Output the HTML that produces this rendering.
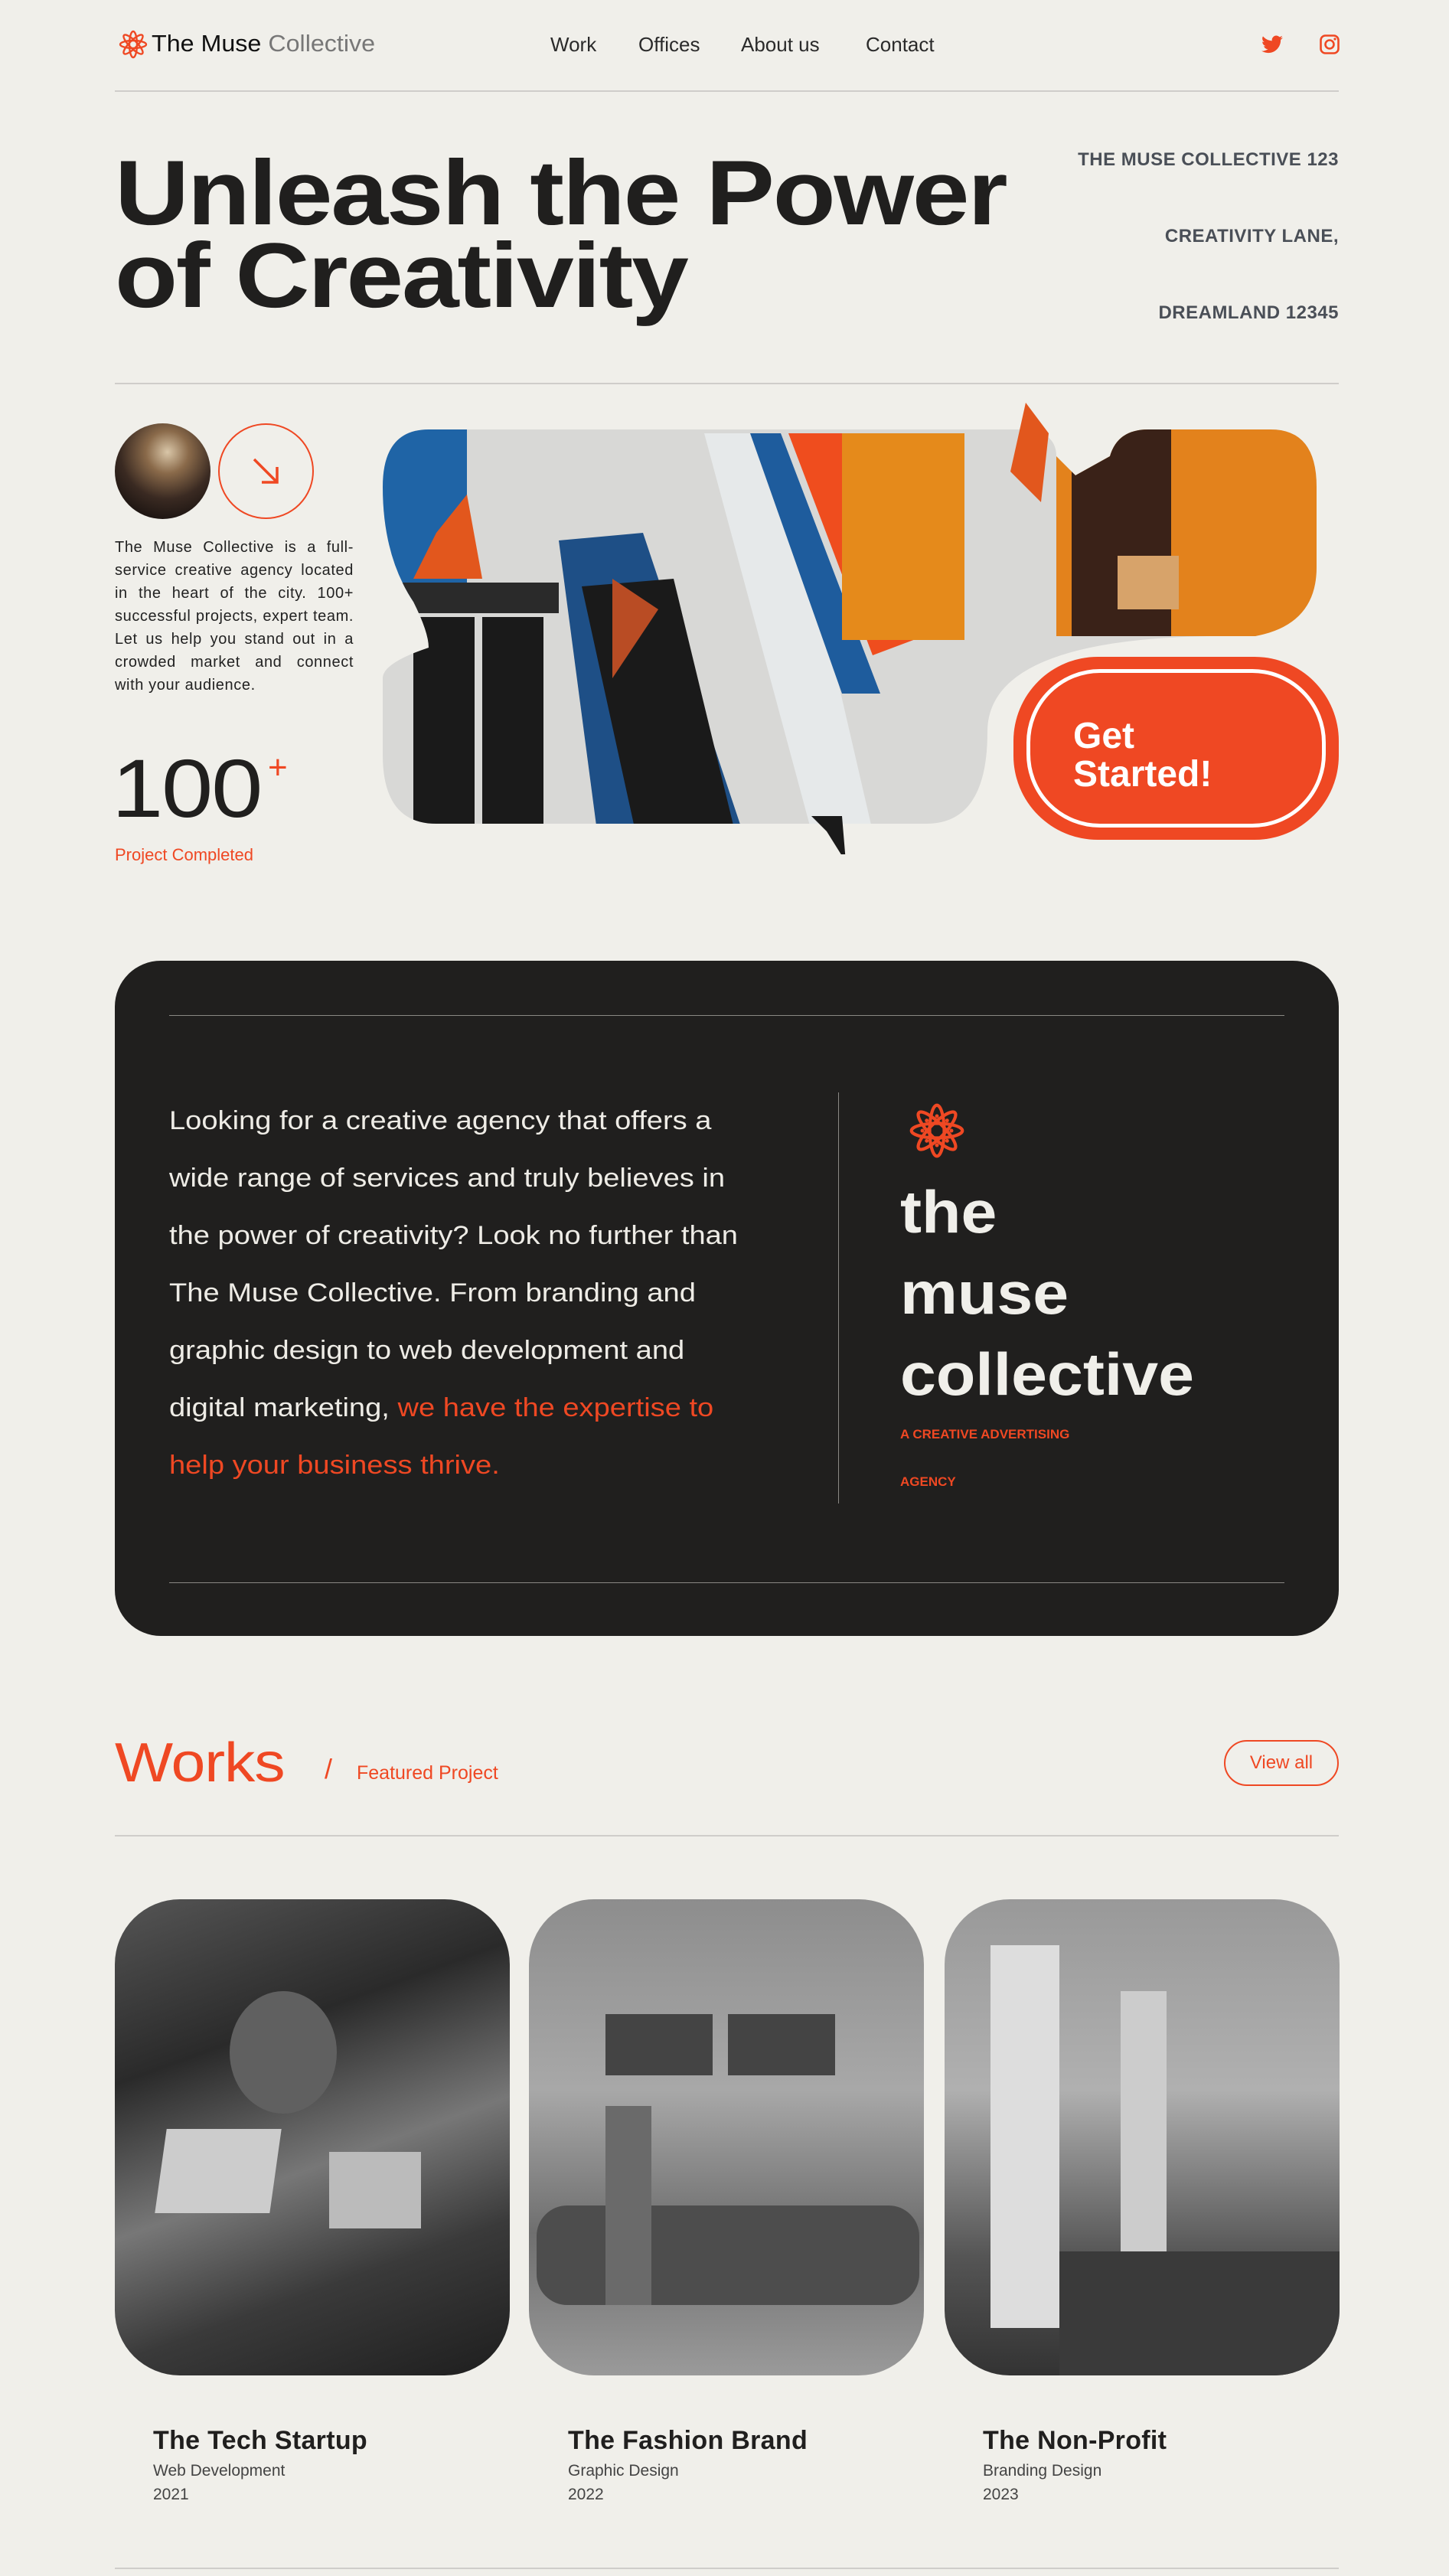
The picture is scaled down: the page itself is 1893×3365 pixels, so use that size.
<!DOCTYPE html>
<html><head><meta charset="utf-8"><style>
*{margin:0;padding:0;box-sizing:border-box}
body{width:1893px;height:3365px;background:#f0efea;position:relative;font-family:"Liberation Sans",sans-serif;color:#201f1e;overflow:hidden}
.a{position:absolute}
.line{position:absolute;left:150px;width:1599px;height:2px;background:#cfcdca}
.nav{font-size:26px;color:#2a2a2a;top:43px}
.addr{right:144px;font-size:24px;font-weight:bold;color:#4a4f57;letter-spacing:0.5px}
.h1{font-size:120px;font-weight:bold;letter-spacing:-2px;line-height:108px;left:150px;top:198px;transform:scaleX(1.12);transform-origin:left}
.card{position:absolute;top:2481px;width:516px;height:622px;border-radius:85px;overflow:hidden}
.ct{font-size:34px;font-weight:bold;top:3169px;letter-spacing:0.3px}
.cs{font-size:21px;color:#444;top:3216px}
.cy{font-size:21px;color:#444;top:3247px}
</style></head><body>

<!-- header -->
<svg class="a" style="left:154px;top:38px" width="40" height="40" viewBox="-20 -20 40 40">
<g fill="none" stroke="#ef4823" stroke-width="2.4">
<ellipse rx="5" ry="17"/><ellipse rx="5" ry="17" transform="rotate(45)"/><ellipse rx="5" ry="17" transform="rotate(90)"/><ellipse rx="5" ry="17" transform="rotate(135)"/></g></svg>
<div class="a" style="left:198px;top:39px;font-size:31px;transform:scaleX(1.04);transform-origin:left"><span style="color:#111">The Muse</span> <span style="color:#777">Collective</span></div>
<div class="a nav" style="left:719px">Work</div>
<div class="a nav" style="left:834px">Offices</div>
<div class="a nav" style="left:968px">About us</div>
<div class="a nav" style="left:1131px">Contact</div>
<svg class="a" style="left:1648px;top:46px" width="28" height="24" viewBox="0 0 24 20"><path fill="#ef4823" d="M24 2.4a10 10 0 0 1-2.8.8A5 5 0 0 0 23.3.5a10 10 0 0 1-3.1 1.2A4.9 4.9 0 0 0 11.8 6 14 14 0 0 1 1.7.9a4.9 4.9 0 0 0 1.5 6.6A4.9 4.9 0 0 1 1 6.9v.1a4.9 4.9 0 0 0 3.9 4.8 5 5 0 0 1-2.2.1 4.9 4.9 0 0 0 4.6 3.4A9.9 9.9 0 0 1 0 17.3 14 14 0 0 0 7.5 19.5c9 0 14-7.5 14-14v-.6A10 10 0 0 0 24 2.4z"/></svg>
<svg class="a" style="left:1724px;top:45px" width="26" height="26" viewBox="0 0 26 26"><rect x="1.5" y="1.5" width="23" height="23" rx="6" fill="none" stroke="#ef4823" stroke-width="2.6"/><circle cx="13" cy="13" r="5.5" fill="none" stroke="#ef4823" stroke-width="2.6"/><circle cx="20" cy="6" r="1.6" fill="#ef4823"/></svg>
<div class="line" style="top:118px"></div>

<!-- hero -->
<div class="a h1">Unleash the Power<br>of Creativity</div>
<div class="a addr" style="top:195px">THE MUSE COLLECTIVE 123</div>
<div class="a addr" style="top:295px">CREATIVITY LANE,</div>
<div class="a addr" style="top:395px">DREAMLAND 12345</div>
<div class="line" style="top:500px"></div>

<div class="a" style="left:150px;top:553px;width:125px;height:125px;border-radius:50%;background:radial-gradient(circle at 55% 30%,#d9c6a8 0,#8a6a4a 25%,#3a2a22 55%,#1d1512 80%);overflow:hidden"></div>
<div class="a" style="left:285px;top:553px;width:125px;height:125px;border-radius:50%;border:2px solid #ef4823"></div>
<svg class="a" style="left:322px;top:590px" width="52" height="52" viewBox="0 0 52 52"><path d="M10 10 L40 40 M40 20 V40 H20" fill="none" stroke="#ef4823" stroke-width="3.5"/></svg>
<div class="a" style="left:150px;top:700px;width:312px;font-size:20px;letter-spacing:0.6px;line-height:30px;text-align:justify;color:#222">The Muse Collective is a full-service creative agency located in the heart of the city. 100+ successful projects, expert team. Let us help you stand out in a crowded market and connect with your audience.</div>
<div class="a" style="left:146px;top:975px;font-size:108px;letter-spacing:-2px;line-height:110px;transform:scaleX(1.12);transform-origin:left">100</div>
<div class="a" style="left:350px;top:978px;font-size:44px;color:#ef4823;line-height:50px">+</div>
<div class="a" style="left:150px;top:1104px;font-size:22px;color:#ef4823">Project Completed</div>

<!-- collage -->
<svg class="a" style="left:500px;top:526px" width="1227" height="590" viewBox="0 0 1227 590">
<defs><clipPath id="cp"><path d="M60 35 H830 Q880 35 880 70 L905 95 L950 70 Q960 35 1000 35 H1160 Q1220 35 1220 110 V215 Q1220 290 1140 305 H1080 Q790 310 790 430 Q790 550 710 550 H70 Q0 550 0 460 V360 Q0 340 60 320 Q60 300 40 260 Q0 200 0 110 Q0 35 60 35 Z"/></clipPath></defs>
<g clip-path="url(#cp)">
<rect width="1227" height="590" fill="#d8d8d6"/>
<rect x="0" y="0" width="110" height="260" fill="#1f64a6"/>
<polygon points="70,170 110,120 130,230 40,230" fill="#e2571d"/>
<rect x="0" y="235" width="230" height="40" fill="#2a2a2a"/>
<rect x="40" y="280" width="80" height="280" fill="#1a1a1a"/>
<rect x="130" y="280" width="80" height="280" fill="#1a1a1a"/>
<polygon points="230,180 340,170 470,560 280,560" fill="#1e4f86"/>
<polygon points="260,240 380,230 460,560 330,560" fill="#1a1a1a"/>
<polygon points="300,230 360,270 300,360" fill="#b94c24"/>
<polygon points="420,40 520,40 640,560 560,560" fill="#e6e9ea"/>
<polygon points="480,40 520,40 650,380 600,380" fill="#1e5c9d"/>
<polygon points="530,40 600,40 720,300 640,330" fill="#ef4d1e"/>
<rect x="600" y="40" width="160" height="270" fill="#e58a1b"/>
<rect x="880" y="35" width="340" height="270" fill="#e3821c"/>
<rect x="900" y="35" width="130" height="270" fill="#3a2218"/>
<rect x="960" y="200" width="80" height="70" fill="#d7a36a"/>
</g>
<polygon points="840,0 870,40 860,130 820,90" fill="#e2571d"/>
<polygon points="560,540 600,540 605,600 580,560" fill="#1a1a1a"/>
</svg>
<div class="a" style="left:1324px;top:858px;width:425px;height:239px;border-radius:110px;background:#ef4823"></div>
<div class="a" style="left:1341px;top:874px;width:391px;height:207px;border-radius:96px;border:5px solid #fff"></div>
<div class="a" style="left:1402px;top:937px;font-size:48px;font-weight:bold;color:#fff;line-height:50px">Get<br>Started!</div>

<!-- dark box -->
<div class="a" style="left:150px;top:1255px;width:1599px;height:882px;border-radius:60px;background:#201f1e"></div>
<div class="a" style="left:221px;top:1326px;width:1457px;height:1px;background:#8a8884"></div>
<div class="a" style="left:221px;top:2067px;width:1457px;height:1px;background:#8a8884"></div>
<div class="a" style="left:1095px;top:1427px;width:1px;height:537px;background:#8a8884"></div>
<div class="a" style="left:221px;top:1427px;font-size:34px;line-height:75px;color:#eeece6;white-space:nowrap;transform:scaleX(1.12);transform-origin:left">Looking for a creative agency that offers a<br>wide range of services and truly believes in<br>the power of creativity? Look no further than<br>The Muse Collective. From branding and<br>graphic design to web development and<br>digital marketing, <span style="color:#ef4823">we have the expertise to<br>help your business thrive.</span></div>
<svg class="a" style="left:1186px;top:1439px" width="76" height="76" viewBox="-20 -20 40 40">
<g fill="none" stroke="#ef4823" stroke-width="2.2">
<ellipse rx="5" ry="17.5"/><ellipse rx="5" ry="17.5" transform="rotate(45)"/><ellipse rx="5" ry="17.5" transform="rotate(90)"/><ellipse rx="5" ry="17.5" transform="rotate(135)"/></g>
<g fill="#ef4823"><circle cy="-10" r="1.3"/><circle cy="10" r="1.3"/><circle cx="-10" r="1.3"/><circle cx="10" r="1.3"/><circle cx="7" cy="7" r="1.3"/><circle cx="-7" cy="7" r="1.3"/><circle cx="7" cy="-7" r="1.3"/><circle cx="-7" cy="-7" r="1.3"/></g></svg>
<div class="a" style="left:1176px;top:1530px;font-size:78px;font-weight:bold;color:#f0efea;line-height:106px;transform:scaleX(1.08);transform-origin:left">the<br>muse<br>collective</div>
<div class="a" style="left:1176px;top:1864px;font-size:17px;font-weight:bold;color:#ef4823">A CREATIVE ADVERTISING</div>
<div class="a" style="left:1176px;top:1926px;font-size:17px;font-weight:bold;color:#ef4823">AGENCY</div>

<!-- works -->
<div class="a" style="left:150px;top:2262px;font-size:72px;color:#ef4823;letter-spacing:-1px;transform:scaleX(1.12);transform-origin:left">Works</div>
<div class="a" style="left:424px;top:2290px;font-size:36px;color:#ef4823">/</div>
<div class="a" style="left:466px;top:2302px;font-size:25px;color:#ef4823">Featured Project</div>
<div class="a" style="left:1599px;top:2273px;width:150px;height:60px;border:2px solid #ef4823;border-radius:30px;color:#ef4823;font-size:24px;text-align:center;line-height:56px">View all</div>
<div class="line" style="top:2397px"></div>

<div class="card" style="left:150px;background:linear-gradient(160deg,#555 0%,#2a2a2a 30%,#777 55%,#3a3a3a 75%,#1e1e1e 100%)">
<div class="a" style="left:60px;top:300px;width:150px;height:110px;background:#ccc;transform:skewX(-8deg)"></div>
<div class="a" style="left:280px;top:330px;width:120px;height:100px;background:#bbb"></div>
<div class="a" style="left:150px;top:120px;width:140px;height:160px;border-radius:50%;background:#606060"></div>
</div>
<div class="card" style="left:691px;background:linear-gradient(180deg,#8d8d8d 0%,#a8a8a8 40%,#6f6f6f 70%,#9a9a9a 100%)">
<div class="a" style="left:100px;top:150px;width:140px;height:80px;background:#444"></div>
<div class="a" style="left:260px;top:150px;width:140px;height:80px;background:#444"></div>
<div class="a" style="left:10px;top:400px;width:500px;height:130px;border-radius:40px;background:#4d4d4d"></div>
<div class="a" style="left:100px;top:270px;width:60px;height:260px;background:#6a6a6a"></div>
</div>
<div class="card" style="left:1234px;background:linear-gradient(180deg,#999 0%,#b0b0b0 40%,#555 75%,#333 100%)">
<div class="a" style="left:60px;top:60px;width:90px;height:500px;background:#ddd"></div>
<div class="a" style="left:230px;top:120px;width:60px;height:400px;background:#ccc"></div>
<div class="a" style="left:150px;top:460px;width:366px;height:162px;background:#3a3a3a"></div>
</div>

<div class="a ct" style="left:200px">The Tech Startup</div>
<div class="a cs" style="left:200px">Web Development</div>
<div class="a cy" style="left:200px">2021</div>
<div class="a ct" style="left:742px">The Fashion Brand</div>
<div class="a cs" style="left:742px">Graphic Design</div>
<div class="a cy" style="left:742px">2022</div>
<div class="a ct" style="left:1284px">The Non-Profit</div>
<div class="a cs" style="left:1284px">Branding Design</div>
<div class="a cy" style="left:1284px">2023</div>
<div class="line" style="top:3354px"></div>
</body></html>
